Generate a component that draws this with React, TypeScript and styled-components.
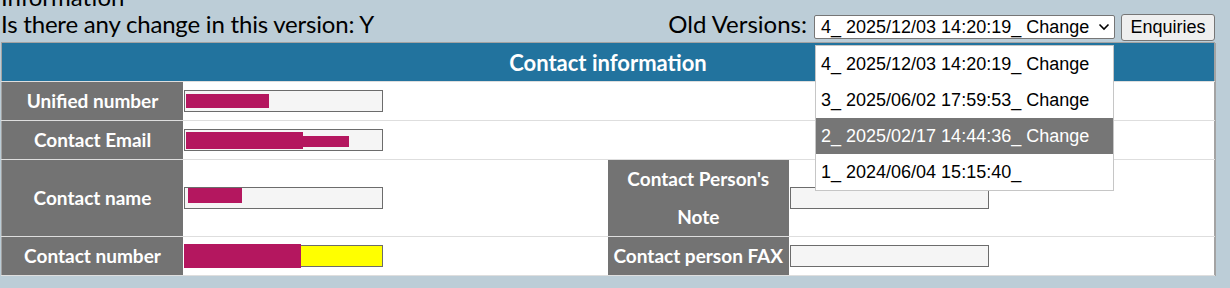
import styled, { createGlobalStyle } from 'styled-components';

const GlobalStyle = createGlobalStyle`
  html, body {
    margin: 0;
    padding: 0;
    background: #bccdd7;
    overflow: hidden;
  }
  body {
    font-family: Lato, "Noto Sans", sans-serif;
  }
`;

const Page = styled.div({
  width: '1214px',
  paddingLeft: '1px'
});

const Title = styled.div({
  fontSize: '24px',
  lineHeight: '27px',
  marginTop: '-17px',
  color: '#000'
});

const TopBar = styled.div({
  display: 'flex',
  alignItems: 'flex-start',
  justifyContent: 'space-between',
  height: '32px'
});

const ChangeInfo = styled.span({
  fontSize: '24px',
  lineHeight: '30px',
  marginTop: '-1px',
  letterSpacing: '-0.2px'
});

const VersionTools = styled.div({
  display: 'flex',
  alignItems: 'flex-start',
  gap: '6px'
});

const VersionLabel = styled.span({
  fontSize: '24px',
  lineHeight: '30px',
  marginTop: '-1px',
  marginRight: '1px'
});

const SelectWrap = styled.div({
  position: 'relative',
  marginTop: '5px'
});

const SelectBox = styled.div({
  boxSizing: 'border-box',
  width: '301px',
  height: '24px',
  border: '1px solid #767676',
  borderRadius: '2px',
  background: '#fff',
  display: 'flex',
  alignItems: 'center',
  justifyContent: 'space-between',
  padding: '0 4px 0 6px',
  fontFamily: '"Liberation Sans", Arial, sans-serif',
  fontSize: '18px'
});

const OptionList = styled.ul({
  position: 'absolute',
  left: '1px',
  top: '30px',
  width: '299px',
  boxSizing: 'border-box',
  margin: 0,
  padding: 0,
  listStyle: 'none',
  background: '#fff',
  border: '1px solid #c6c6c6',
  zIndex: 5,
  fontFamily: '"Liberation Sans", Arial, sans-serif',
  fontSize: '18px'
});

const OptionItem = styled.li<{ $active?: boolean }>`
  height: 36px;
  line-height: 36px;
  padding-left: 5px;
  background: ${(p) => (p.$active ? '#767676' : '#fff')};
  color: ${(p) => (p.$active ? '#fff' : '#000')};
  white-space: nowrap;
`;

const Button = styled.button({
  boxSizing: 'border-box',
  width: '94px',
  height: '27px',
  marginTop: '4px',
  border: '1px solid #767676',
  borderRadius: '3px',
  background: '#efefef',
  fontFamily: '"Liberation Sans", Arial, sans-serif',
  fontSize: '18px',
  color: '#000',
  padding: 0
});

const Table = styled.table({
  width: '1214px',
  borderCollapse: 'collapse',
  tableLayout: 'fixed',
  background: '#fff',
  border: '1px solid #a3a3a3',
  boxShadow: '1px 1px 0 #a3a3a3'
});

const HeaderCell = styled.th({
  height: '38px',
  padding: 0,
  background: '#22739e',
  color: '#fff',
  fontSize: '22px',
  fontWeight: 700,
  borderBottom: '1px solid #dedede'
});

const LabelCell = styled.td<{ $wrap?: boolean }>`
  padding: 0 4px;
  background: #737373;
  color: #fff;
  font-size: 19px;
  font-weight: 700;
  text-align: center;
  line-height: 38px;
  white-space: ${(p) => (p.$wrap ? 'normal' : 'nowrap')};
  border-bottom: 1px solid #dedede;
  border-right: 1px solid #fff;
`;

const ValueCell = styled.td({
  padding: 0,
  height: '38px',
  verticalAlign: 'middle',
  borderBottom: '1px solid #dedede'
});

const Field = styled.div<{ $bg?: string }>`
  position: relative;
  box-sizing: border-box;
  width: 199px;
  height: 22px;
  border: 1px solid #6c6c6c;
  background: ${(p) => p.$bg || '#f5f5f5'};
`;

const Redact = styled.span({
  position: 'absolute',
  background: '#b4175f'
});

function Chevron() {
  return (
    <svg width='12' height='8' viewBox='0 0 12 8'>
      <path d='M1.5 1.5 L6 6 L10.5 1.5' fill='none' stroke='#000' strokeWidth='1.6' />
    </svg>
  );
}

const versions = [
  '4_ 2025/12/03 14:20:19_ Change',
  '3_ 2025/06/02 17:59:53_ Change',
  '2_ 2025/02/17 14:44:36_ Change',
  '1_ 2024/06/04 15:15:40_'
];

export default function App() {
  return (
    <Page>
      <GlobalStyle />
      <Title>Information</Title>
      <TopBar>
        <ChangeInfo>Is there any change in this version: Y</ChangeInfo>
        <VersionTools>
          <VersionLabel>Old Versions:</VersionLabel>
          <SelectWrap>
            <SelectBox>
              <span>{versions[0]}</span>
              <Chevron />
            </SelectBox>
            <OptionList>
              {versions.map((v, i) => (
                <OptionItem key={v} $active={i === 2}>
                  {v}
                </OptionItem>
              ))}
            </OptionList>
          </SelectWrap>
          <Button>Enquiries</Button>
        </VersionTools>
      </TopBar>
      <Table>
        <colgroup>
          <col style={{ width: '182px' }} />
          <col style={{ width: '424px' }} />
          <col style={{ width: '182px' }} />
          <col />
        </colgroup>
        <tbody>
          <tr>
            <HeaderCell colSpan={4}>Contact information</HeaderCell>
          </tr>
          <tr>
            <LabelCell>Unified number</LabelCell>
            <ValueCell colSpan={3}>
              <Field>
                <Redact style={{ left: 1, top: 3, width: 83, height: 14 }} />
              </Field>
            </ValueCell>
          </tr>
          <tr>
            <LabelCell>Contact Email</LabelCell>
            <ValueCell colSpan={3}>
              <Field>
                <Redact style={{ left: 1, top: 2, width: 117, height: 17 }} />
                <Redact style={{ left: 117, top: 6, width: 47, height: 11 }} />
              </Field>
            </ValueCell>
          </tr>
          <tr>
            <LabelCell style={{ height: '76px' }}>Contact name</LabelCell>
            <ValueCell>
              <Field>
                <Redact style={{ left: 3, top: 0, width: 54, height: 15 }} />
              </Field>
            </ValueCell>
            <LabelCell $wrap>Contact Person's Note</LabelCell>
            <ValueCell>
              <Field />
            </ValueCell>
          </tr>
          <tr>
            <LabelCell>Contact number</LabelCell>
            <ValueCell>
              <Field $bg='#ffff00'>
                <Redact style={{ left: -1, top: -2, width: 117, height: 24 }} />
              </Field>
            </ValueCell>
            <LabelCell>Contact person FAX</LabelCell>
            <ValueCell>
              <Field />
            </ValueCell>
          </tr>
        </tbody>
      </Table>
    </Page>
  );
}
